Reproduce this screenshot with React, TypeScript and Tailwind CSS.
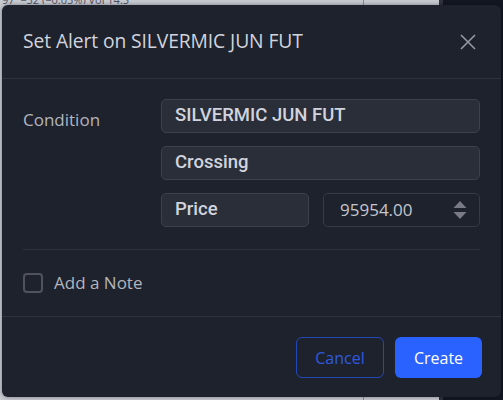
export default function App() {
  return (
    <div className="relative w-[503px] h-[400px] overflow-hidden bg-[#c8cad2] font-['Open_Sans',sans-serif]">
      {/* chart page behind the modal */}
      <div className="flex h-full">
        <div className="flex-1 flex flex-col">
          <div className="h-[5px] overflow-hidden text-[11px] leading-none text-[#50535e] pl-[2px] -mt-[1px]">
            <span className="relative -top-[5px]">97 &nbsp;−52 (−0.05%) Vol 14.5</span>
          </div>
        </div>
        <div className="w-px bg-[#8a8d96]" />
        <div className="w-[75px] bg-[#c8cad2]" />
        <div className="w-[4px] bg-[#30333d]" />
        <div className="w-[60px] bg-[#131722]" />
      </div>

      <div className="absolute left-[2px] top-[5px] w-[499px] h-[392px] rounded-[6px] bg-[#1e222d] shadow-[0_0_4px_rgba(0,0,0,0.4)] flex flex-col">
        <div className="flex items-center justify-between h-[74px] pl-[21px] pr-[24px] border-b border-[#2e3240]">
          <span className="text-[19.3px] text-[#d1d4dc] tracking-[-0.1px]">Set Alert on SILVERMIC JUN FUT</span>
          <svg width="18" height="18" viewBox="0 0 18 18" className="text-[#9598a1]">
            <path d="M2 2 L16 16 M16 2 L2 16" stroke="currentColor" strokeWidth="1.6" />
          </svg>
        </div>

        <div className="flex px-[21px] pt-[20px]">
          <div className="w-[138px] pt-[8px] text-[17px] text-[#b2b5be]">Condition</div>
          <div className="flex-1 flex flex-col gap-[13px]">
            <div className="h-[34px] rounded-[5px] border border-[#3d414d] bg-[#2a2e39] flex items-center pl-[13px] font-['Roboto',sans-serif] font-medium text-[18.5px] text-[#d1d4dc]">
              SILVERMIC JUN FUT
            </div>
            <div className="h-[34px] rounded-[5px] border border-[#3d414d] bg-[#2a2e39] flex items-center pl-[13px] font-['Roboto',sans-serif] font-medium text-[18.5px] text-[#d1d4dc]">
              Crossing
            </div>
            <div className="flex gap-[14px]">
              <div className="w-[148px] h-[34px] rounded-[5px] border border-[#3d414d] bg-[#2a2e39] flex items-center pl-[13px] font-['Roboto',sans-serif] font-medium text-[18.5px] text-[#d1d4dc]">
                Price
              </div>
              <div className="flex-1 h-[34px] rounded-[5px] border border-[#363a45] flex items-center justify-between pl-[16px] pr-[12px] text-[17px] text-[#c3c6ce]">
                <span>95954.00</span>
                <svg width="14" height="20" viewBox="0 0 14 20" className="text-[#787b86]">
                  <path d="M7 1 L13.5 8 H0.5 Z M0.5 12 H13.5 L7 19 Z" fill="currentColor" />
                </svg>
              </div>
            </div>
          </div>
        </div>

        <div className="mx-[21px] mt-[22px] border-t border-[#2e3240]" />

        <div className="flex items-center gap-[11px] px-[21px] h-[66px]">
          <div className="w-[20px] h-[20px] rounded-[4px] border-2 border-[#50535e]" />
          <span className="text-[17px] text-[#b2b5be]">Add a Note</span>
        </div>

        <div className="border-t border-[#2e3240]" />

        <div className="flex justify-end gap-[11px] px-[19px] pt-[20px]">
          <button className="w-[88px] h-[41px] rounded-[6px] border-[1.5px] border-[#2348b8] text-[#2f5ae0] text-[16px]">
            Cancel
          </button>
          <button className="w-[87px] h-[41px] rounded-[6px] bg-[#2962ff] text-white text-[16px]">
            Create
          </button>
        </div>
      </div>
    </div>
  );
}
